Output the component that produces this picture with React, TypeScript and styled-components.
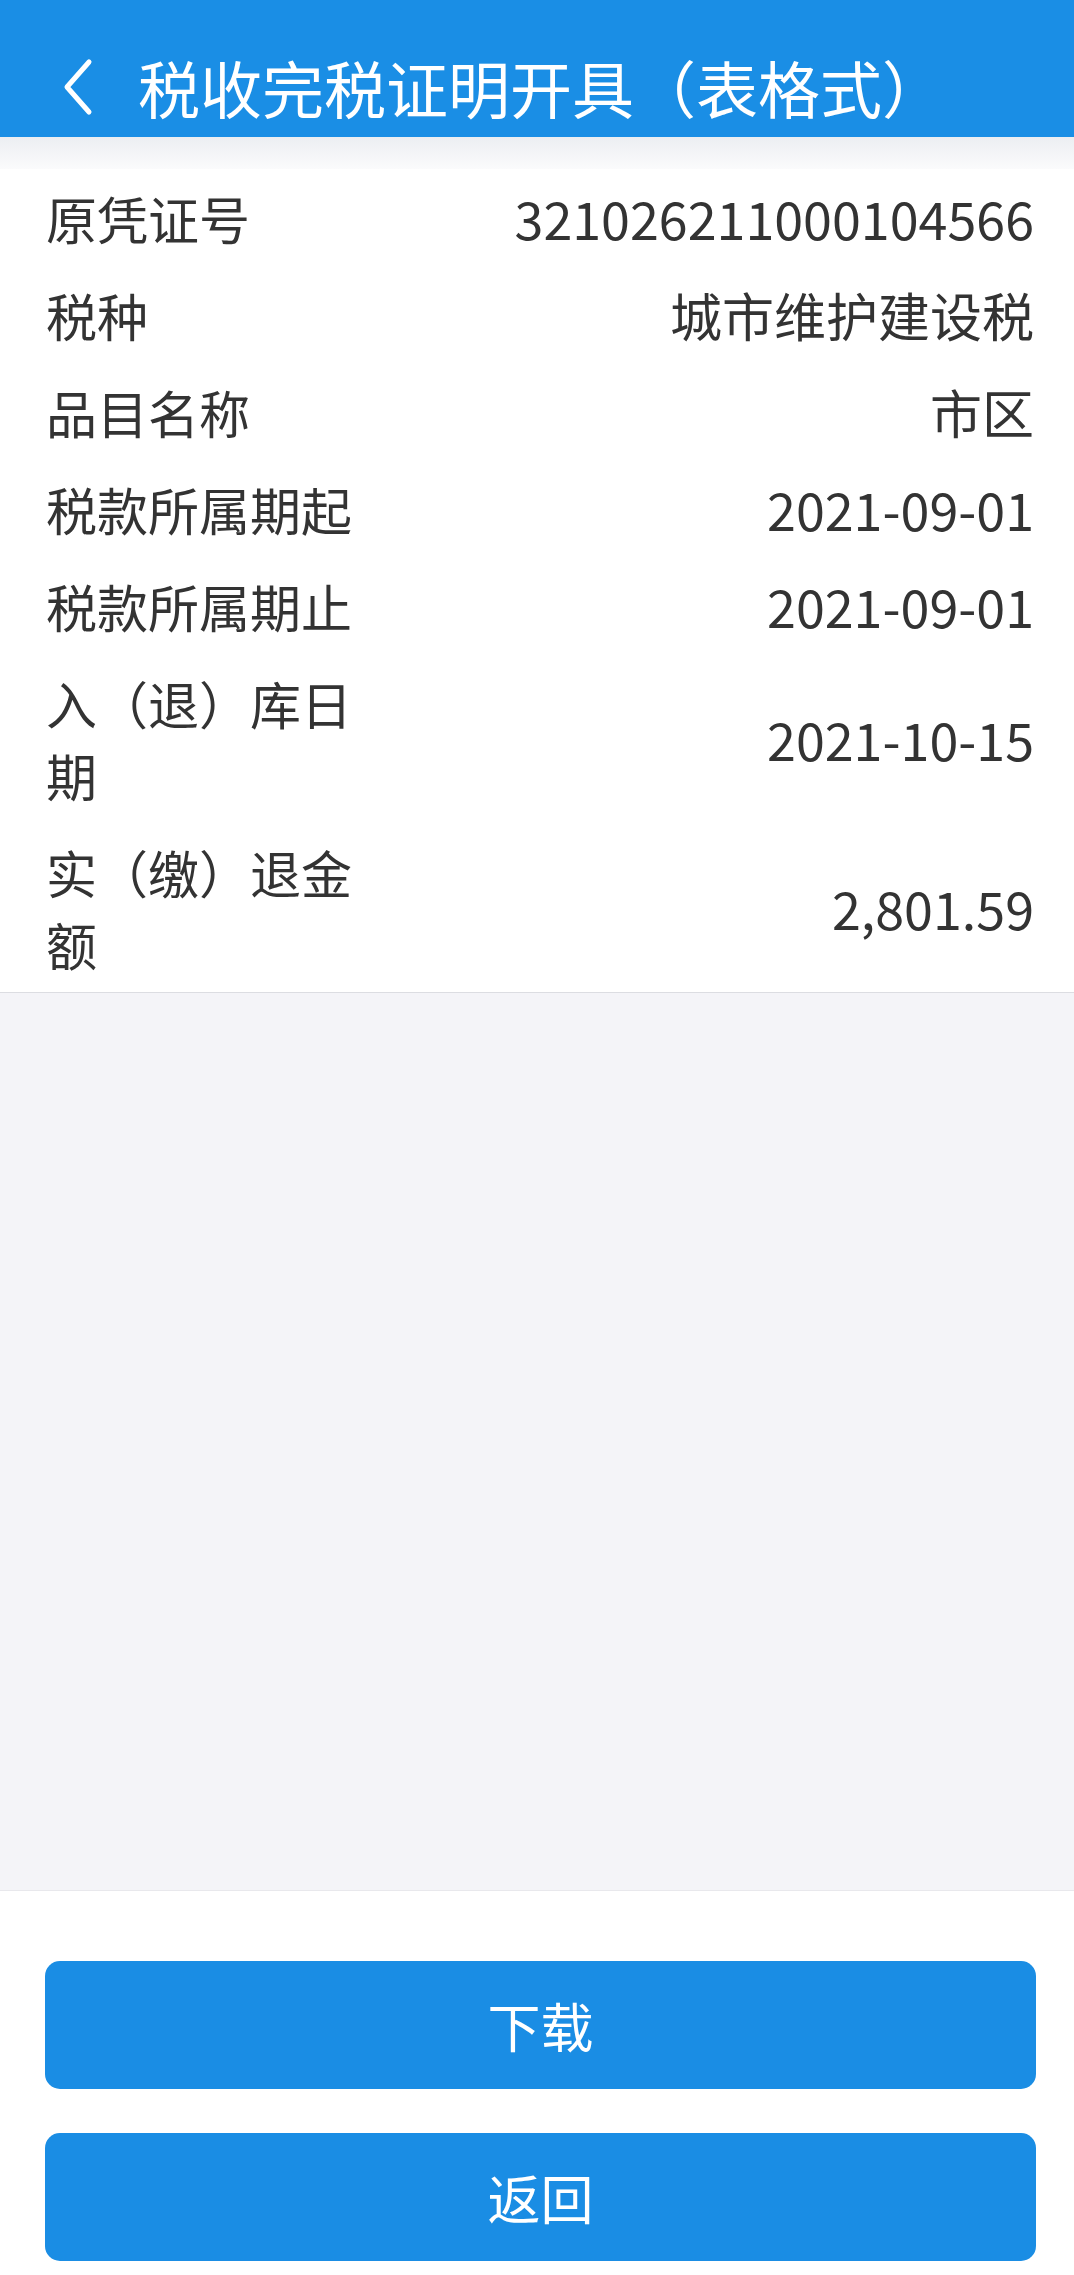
import React from 'react'
import styled, { createGlobalStyle } from 'styled-components'

const GlobalStyle = createGlobalStyle`
  * { box-sizing: border-box; }
  body {
    margin: 0;
    font-family: "Noto Sans CJK SC", "Noto Sans", sans-serif;
    background: #f4f4f8;
  }
`

const Page = styled.div`
  display: flex;
  flex-direction: column;
  min-height: 100vh;
  background: #f4f4f8;
`

const Header = styled.header`
  height: 137px;
  padding: 36px 0 0 62px;
  background: #1a8ee5;
  display: flex;
  align-items: center;
  gap: 45px;
  color: #fff;
`

const Title = styled.h1`
  margin: 0;
  font-size: 62px;
  font-weight: 400;
  line-height: 1;
`

const Shade = styled.div`
  height: 32px;
  background: linear-gradient(#eceef2, #fbfbfc);
`

const List = styled.div`
  background: #fff;
  border-bottom: 1px solid #dcdde2;
`

const Row = styled.div`
  display: flex;
  align-items: center;
  padding: 12.5px 40px 12.5px 46px;
  font-size: 51px;
  line-height: 72px;
  color: #333;
`

const Label = styled.div`
  width: 320px;
  flex-shrink: 0;
`

const Value = styled.div`
  flex: 1;
  text-align: right;
  font-size: 52px;
`

const Fill = styled.div`
  flex: 1;
`

const Footer = styled.footer`
  background: #fff;
  border-top: 1px solid #e8e8ec;
  padding: 70px 38px 14px 45px;
  display: flex;
  flex-direction: column;
  gap: 44px;
`

const Button = styled.button`
  height: 128px;
  border: none;
  border-radius: 15px;
  background: #1a8de4;
  color: #fff;
  font-family: inherit;
  font-size: 53px;
  cursor: pointer;
`

const rows: [string, string][] = [
  ['原凭证号', '321026211000104566'],
  ['税种', '城市维护建设税'],
  ['品目名称', '市区'],
  ['税款所属期起', '2021-09-01'],
  ['税款所属期止', '2021-09-01'],
  ['入（退）库日期', '2021-10-15'],
  ['实（缴）退金额', '2,801.59'],
]

const App = () => {
  return (
    <Page>
      <GlobalStyle />
      <Header>
        <svg width="31" height="58" viewBox="0 0 31 58">
          <path d="M27 4 L5 29 L27 54" fill="none" stroke="#fff" strokeWidth="5" strokeLinecap="round" strokeLinejoin="round" />
        </svg>
        <Title>税收完税证明开具（表格式）</Title>
      </Header>
      <Shade />
      <List>
        {rows.map(([label, value]) => (
          <Row key={label}>
            <Label>{label}</Label>
            <Value>{value}</Value>
          </Row>
        ))}
      </List>
      <Fill />
      <Footer>
        <Button>下载</Button>
        <Button>返回</Button>
      </Footer>
    </Page>
  )
}

export default App
